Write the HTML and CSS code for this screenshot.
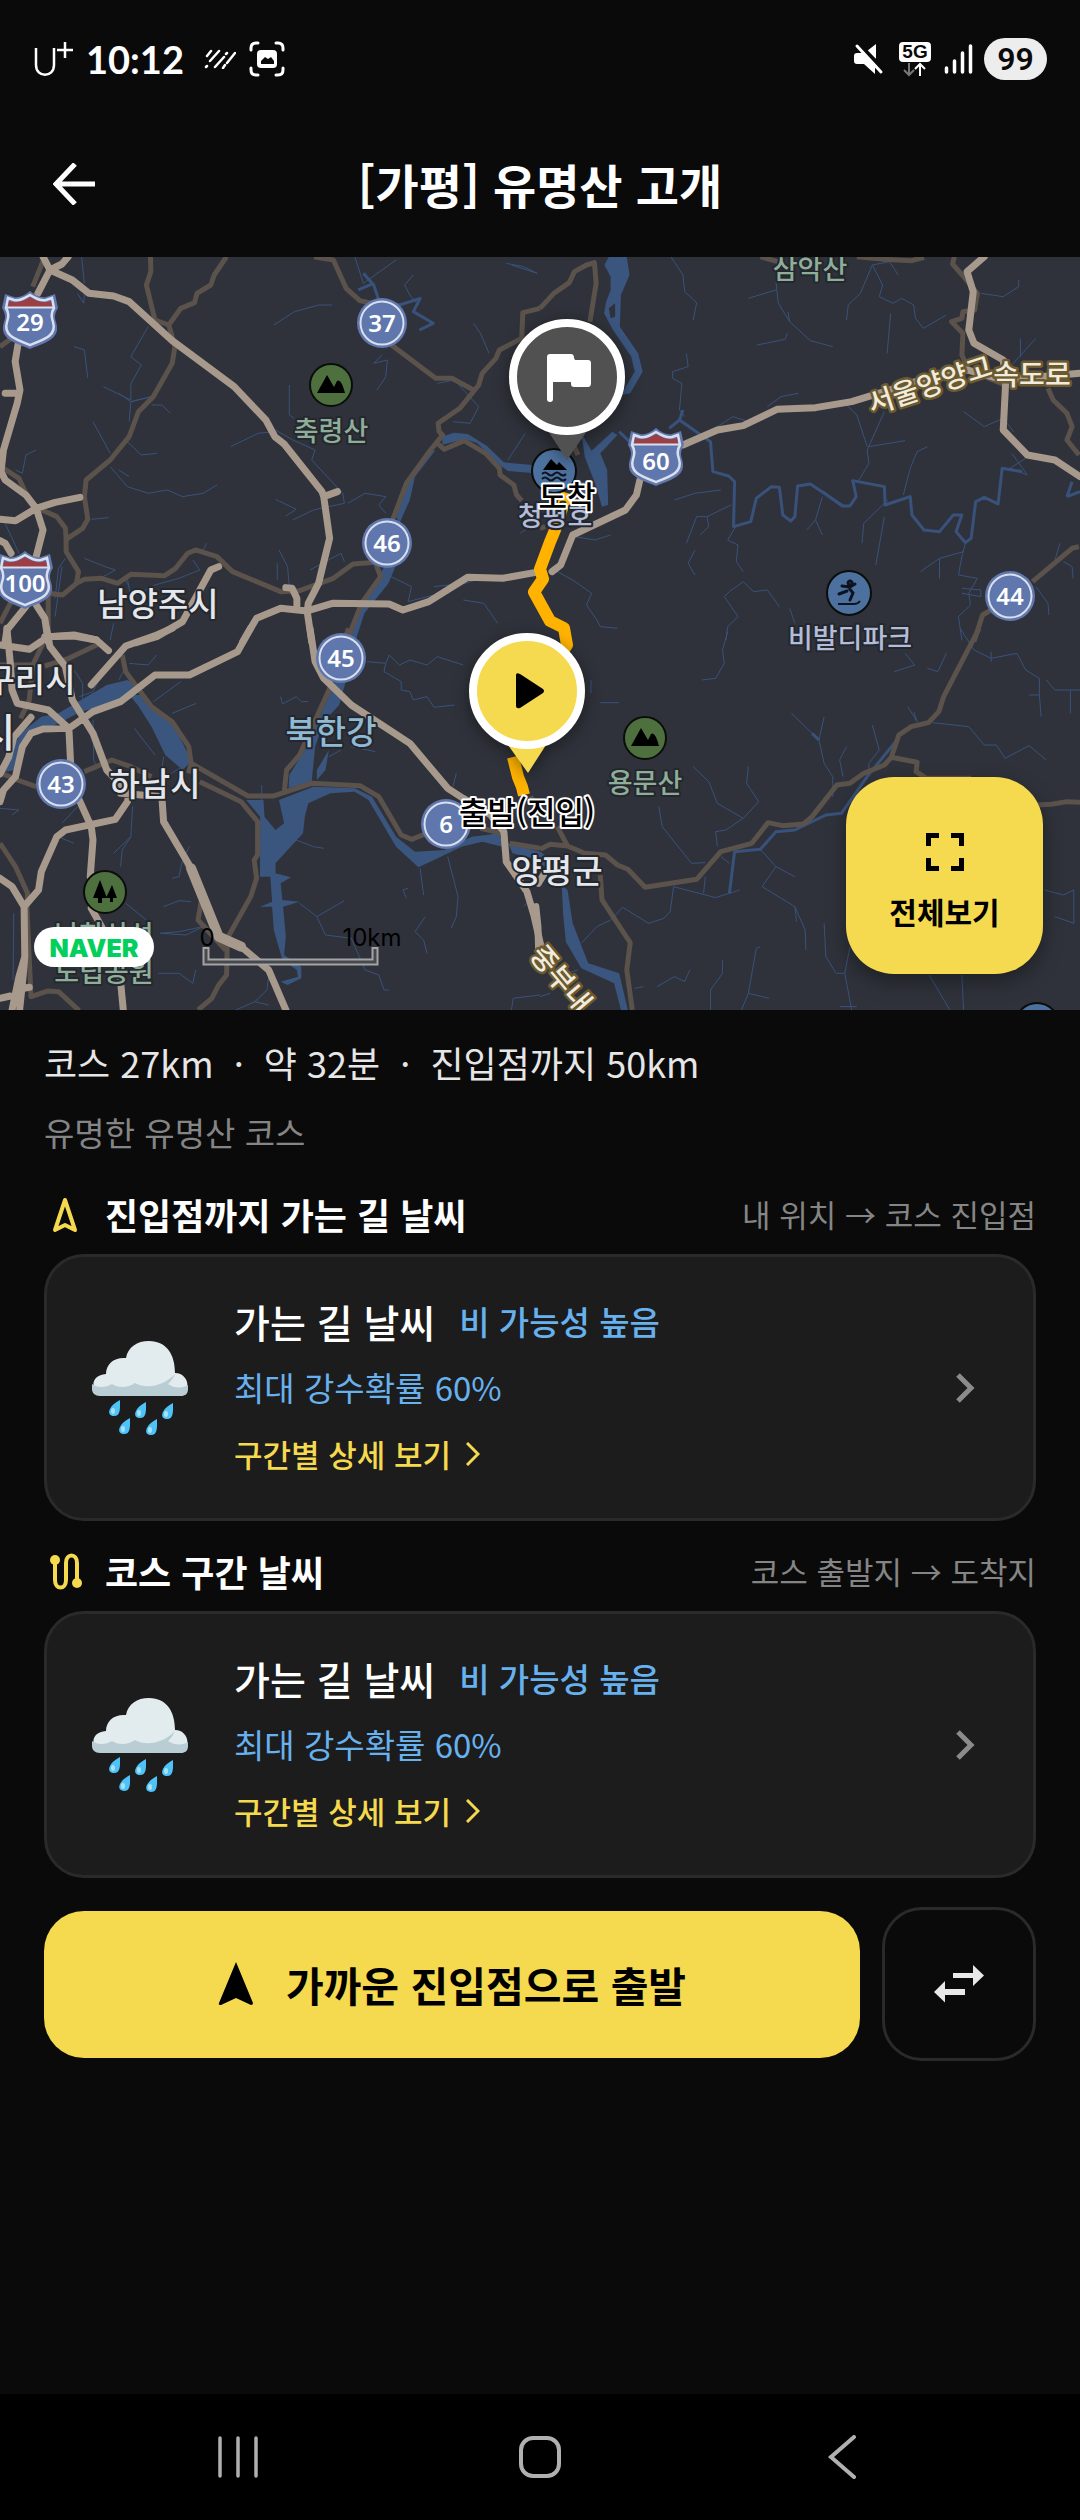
FILE: index.html
```html
<!DOCTYPE html>
<html lang="ko">
<head>
<meta charset="utf-8">
<meta name="viewport" content="width=device-width, initial-scale=1">
<title>[가평] 유명산 고개</title>
<link rel="stylesheet" href="styles.css">
</head>
<body>
<svg class="defs" aria-hidden="true">
  <symbol id="rain" viewBox="0 0 96 94">
    <path fill="#e2ebee" d="M10 55C-2 50-2 34 14 33c0-10 8-17 20-16C36 6 45 0 57 0c18 0 26 14 26 32 12 0 16 14 9 21z"/>
    <path fill="#b9ced4" d="M0 43c5 4 14 4 20 0 6 4 16 4 23-1 12 7 30 2 40-9-2 5-4 7-7 10 7 5 16 4 20 1v4c0 5-3 7-7 7H8c-5 0-8-3-8-7z"/>
    <g fill="#4fc3f7">
      <path id="drop" d="M28 59c0 8 1 16-6 16-8 0-6-10 6-16z"/>
      <use href="#drop" x="26" y="2"/><use href="#drop" x="53" y="3"/>
      <use href="#drop" x="10" y="18"/><use href="#drop" x="37" y="19"/>
    </g>
    <g fill="#a5e3fb">
      <ellipse cx="21" cy="70" rx="2" ry="3"/><ellipse cx="47" cy="72" rx="2" ry="3"/><ellipse cx="74" cy="73" rx="2" ry="3"/><ellipse cx="31" cy="88" rx="2" ry="3"/><ellipse cx="58" cy="89" rx="2" ry="3"/>
    </g>
  </symbol>
  <symbol id="chevron" viewBox="0 0 20 30"><path d="M2 2l13 13L2 28" fill="none" stroke="#8b8b8b" stroke-width="5"/></symbol>
  <symbol id="more" viewBox="0 0 14 24"><path d="M1 1l11 11L1 23" fill="none" stroke="#f5d94f" stroke-width="3"/></symbol>
  <symbol id="shield" viewBox="-28 -30 56 60">
    <path fill="#6078ae" d="M-25-26l9 3c6 1 11-2 16-6 5 4 10 7 16 6l9-3 3 14c-3 5-4 9-2 14C31 18 18 22 0 29-18 22-31 18-26 2c2-5 1-9-2-14z"/>
    <path fill="#5f77ad" stroke="#d9dfee" stroke-width="2.5" d="M-22-22l6 2c6 1 11-2 16-5 5 3 10 6 16 5l6-2 2 10c-3 5-3 9-1 14C27 15 16 19 0 25-16 19-27 15-23 2c2-5 2-9-1-14z"/>
    <path fill="#9b3f45" d="M-21-19c8 3 15 0 21-4 6 4 13 7 21 4l1 6h-44z"/>
    <path stroke="#d9dfee" stroke-width="2" d="M-23-12.500h46"/>
  </symbol>
  <symbol id="badge" viewBox="-26 -26 52 52"><circle r="25" fill="#6078ae"/><circle r="21.500" fill="#5f77ad" stroke="#d9dfee" stroke-width="2"/></symbol>
  <symbol id="mountain" viewBox="-24 -24 48 48"><circle r="21" fill="#4d703e" stroke="#0b0d0b" stroke-width="2"/><path d="M-14 8L-4-10 3 2l3-6q4-3 8 12z"/></symbol>
</svg>

<div class="status">
  <div class="status-side">
    <svg class="carrier" viewBox="0 0 40 36" role="img" aria-label="U+"><path d="M2 7v17c0 13 18 13 18 0V7M31 1v16M23 9h16" fill="none" stroke="#fff" stroke-width="2.500"/></svg>
    <span class="clock">10:12</span>
    <svg class="stripes" viewBox="0 0 32 20" aria-hidden="true"><path d="M2 18l1-1M3 7l4-5M6 12L15 2M11 18L20 8M22 5l1-1M19 19l2-3M23 14L31 4" stroke="#fff" stroke-width="2.500" stroke-linecap="round"/></svg>
    <svg class="capture" viewBox="0 0 36 36" aria-hidden="true"><path d="M2 9V7q0-5 5-5h2M27 2h2q5 0 5 5v2M34 27v2q0 5-5 5h-2M9 34H7q-5 0-5-5v-2" fill="none" stroke="#fff" stroke-width="3" stroke-linecap="round"/><rect x="8" y="9" width="20" height="18" rx="4" fill="#fff"/><path d="M12 23v-3l4-4 3 2 3-2 3 4v3z" fill="#0a0a0a"/></svg>
  </div>
  <div class="status-side status-right">
    <svg class="mute" viewBox="0 0 30 32" aria-hidden="true"><path fill="#fff" d="M22 1v15l-9-8zM3 10h6l12 13v8L10 21H3q-3 0-3-3v-5q0-3 3-3z"/><path d="M5 0l24 26" stroke="#0a0a0a" stroke-width="3"/><path d="M3 3l24 26" stroke="#fff" stroke-width="3" stroke-linecap="round"/></svg>
    <div class="network"><span>5G</span>
      <svg viewBox="0 0 32 15" aria-hidden="true"><g fill="none" stroke-width="2"><path d="M10 1v12M5 8l5 5 5-5" stroke="#777"/><path d="M21 14V2M16 7l5-5 5 5" stroke="#fff"/></g></svg>
    </div>
    <svg class="signal" viewBox="0 0 30 32" aria-hidden="true"><path d="M2.500 25v4M10.500 18v11M18.500 10v19M26.500 3v26" stroke="#fff" stroke-width="3.500" stroke-linecap="round"/></svg>
    <span class="battery">99</span>
  </div>
</div>

<header class="appbar">
  <button class="back" aria-label="뒤로"><svg viewBox="0 0 42 42"><path d="M42 21H4M22 1L3 21l19 20" fill="none" stroke="#fff" stroke-width="5"/></svg></button>
  <h1>[가평] 유명산 고개</h1>
</header>

<main>
<section class="map" aria-label="코스 지도">
<svg class="map-canvas" viewBox="0 0 1080 753">
  <rect width="1080" height="753" fill="#2f323a"/>
  <g class="tile" transform="matrix(.3444 0 0 .3333 0 -7)">
    <path class="lake" d="M1265 600L1205 680 1190 750 1160 820 1150 800 1180 700 1240 610zM1283 560l35-12 40 4 55 35 50 50 82 8v24l-70-6-20-14-70-70-35-12-65 17zM1120 945l28 5-20 50-70 90-25 80h-28l40-110z"/>
    <path class="river" d="M1055 70l30 35 15 45M1085 100l-45 20M1100 150l60 15 60-20-20 40 58 35-40 20"/>
    <path class="stream" d="M237 20l8 80M225 130l18 30 2-30M430 230l-50 90 30 25-32 60M215 290l30 10 10 85M380 405v45l-80-40M345 430l35 25 60-15-60 15-5 60M440 465h30l25 25M270 515l50 95M370 575l40 40 45-5M320 650l50 60 60 20 55-10 45 20 60-10 40-25M375 680l-30-20M105 600l-30 15-10 55-20-10M265 808l50-5M15 820l40 90M245 925l60 25 30 10-35 20M370 985l10 60 70-40 70-20 60-25-20-30M600 880l-10 20M800 540l50 30 65 30-10 30 45 50 45 50 5 30-90 20-60 30M670 590l80-40 50-5M800 748l60 30-30 20M1010 760l50-30 60 10-20 25 20 25M795 225l60-40 70-20h40M1095 420l25-40 5-50-40 10 25-25M1200 75l-25 30 15 30 25 30M1030 20l25 80 95-70M1375 220l20 30 25 60M1270 400l50-10 30 35 40 45-25 50-50-5M1470 40l50 10 40 20-75-25M1525 550l-50 80M810 900l25 50 5 60M805 940v50M900 960l90-50 10 25M1135 980l60 30-10 45 75-20M1260 1010l90-10 50-15M1345 1050l60 10 40 60M1510 850l30-20M840 405v90l15 10M375 1010l-15-25M160 1045l10-90 20-30M330 1120l-10 50M180 950l-20 150"/>
    <path class="local" d="M130 20L95 110M0 290l40-30M437 20l1 45-13 40 25 105 40 15 35-50 40-17 7-28 40-25 10-30 36-55M490 225l18 65-8 50-55 100-43 45-27 75-55 70-70 60-5 50 10 68-15 27-48 33-2-33-25-35-55-25M192 868v37l36 60-6 35-40 35-42-5M222 1000l23-12 50-3 47 15 38-27 98 4 32-22 35-45 23-10 62 20 45 45 140 60 55-3 98-37 57-43 65-5 15 43-55 80-42 110M0 648l55 37 20 45 25 40M912 20l56 10 37 85 40 37 55 13M1130 280l135 105h47l63 35M1568 175l-50 13-3 77-65 35-10 25-40 45-10 35-55 70-63 45 3 25 10 10-35 45-70 100-40 110M1270 580l20 18 58-26 62 38 40 45 2 20 40 30 8 30 15 17M0 1120l40-80M140 1030v135"/>
    <path class="highway" d="M125 20l20 40-35 70M198 20l-18 22-35 18 65 30 48 40 72 8 45 17 125 117 180 138 92 100 26 50 27 22 110 143 5 15 40-15M940 740l17 125-32 135-30 60-3 25 13 90M52 285l-8 50 14 85-8 40-40 140-7 65 12 25 60 45 30 40-60 37-45-4M105 775l55-18 72-15M15 430h40M105 775l20 65-20 80M0 872l15 8 17 30M75 1070l-55 70-5 35M105 1065l25 40 10 70M130 1160l85-2 65 12M635 950l-23 10-82 155-75 45-60 18M830 1013l18 2 14 30v33M705 1175l40-70 70-30 77 8 73-23 165 2 40 18 75-25 113-73 102 3 108-20"/>
  </g>
  <g class="tile" transform="matrix(.3444 0 0 .3333 540 -7)">
    <path class="lake" d="M200 20h52l8 55-25 60-3 95 53 80 13 55-36 65-27 5 40-70-10-45-53-80-26-50 6-35 13-35v-40l-18-35zM200 175l5 30 13-5v-40zM120 550l30 52 60-57 15 10-50 55 20 50 3 105-18 5-20-70-30-80zM100 690l40 10 15 50-30-10z" fill-rule="evenodd"/>
    <path class="river" d="M375 535l30-25 55 40 35 25 7 90 46 13 17 17-3 135 50-15 16-70 44-35 23 2 10 83 23 18 12-13 8-92 37-6 95 66h20l18-28-10-48 92 18 2 55 73-25 5 55 35 45 45 5 40-50h25l-17 50 27 33 17-13 13-110 25-13 40 20 12-107 58 10"/>
    <path class="river" d="M405 510l10-30M230 545l30 30M1530 740l15-45M1530 740l38-15M820 725l60 45"/>
    <path class="stream" d="M925 692l30-52-5-40 50-115M955 590l105-18M890 465l30 30 30 95M380 20l35 55 5 50 35 33-10 52M685 95l7 65 33 55 60 57 65 18M965 45l30 60-10 35 40 20 25-15 35 20 5 40 23 30 67-40M965 45l-35 85-35 35-5 45M965 45l50-10 25 40M1018 190l-10 120M1280 130l65 10 45-30V90M605 145l80-25M630 285l82-17 6-18M425 310l5 40-45 15v20l27 15-7 80 15 20M500 540l60-40 60 20M660 470l40-30 50-10M1440 265l-70 80M1395 265v55M390 750l60-20 75-10M555 765l-70 35 5 30-25 25M568 830l-23 40 30 15-5 50 20 30M485 800h-30l-30 80M450 900l-20 40 20 35M820 740l-20 70 20 45M800 810l-25 30M1010 750l-70 70-5 60M1000 800l-25 145M50 965l45 25 55 40-15 35 30 45 10 20 50 5M540 1170l5-40 30-30-40-60 15-15 40-30 30 30 40-5 35 50M725 1075l15 45M1235 880l-10 40-10 55 55 10-25 45 5 35-35 35 10 70M1105 965l55-40 70-20M1160 925v60M1225 1015l55 5v20l-55-10M1440 1010l35 50 3 35M1510 880l-15 50M1520 935l25 15 3 35M1230 485l60 45 55-25 30 40M1370 610l45 65-50-20 45-30M1055 735l20-80 20-50 30-15M100 860l60 10 45-15M725 215l-5-30"/>
    <path class="local" d="M0 175l40-45 45-32 15-33 35-20 23-7 5 62-18 115M640 20l50 15M920 20l80 8 80 4 35-10M1203 20l-5 22 32 38 40 50-8 50-34 5-3 20-30 10 33 35-3 65 20 45 105 45M1475 415l15 35 40 40 15 40-15 40 35 45M1565 890l-20 5-115 100M1310 1080l-25 15-25 80M100 590l10 25M0 835l15-5"/>
    <path class="highway" d="M1290 20l-50 45 18 60-13 115 15 40 85 50 7 70-7 140 70 75 80 15 73 50M415 585l100-45 75-13 98-49 112-5 105-18 95-30 90-30 150-35 105 30 223-20M290 690l-10 45-32 45-153 75-35 90-25 20"/>
  </g>
  <g class="tile" transform="matrix(.3444 0 0 .3333 0 373)">
    <path class="lake" d="M15 425l30-5 15-75 50-45 40-10 85-45 115-30 35-25 35-15-50-25-60 15-75 45-65 40-50 10-60 50-40 80zM375 195h35l30 40 60 40 50 105v20l-20 20-50-45-40-85-40-65zM975 150h30l-20 75-45 50-25 75-10 105-67 20 2-40 30-50 20-35 35-85 25-55zM955 360l-10 60-25 30v-30zM715 510l50 0 3 50 32 40 25-20-15-70 100-40 120 5 50 25 70 120 55 45 85-5 80-40 80-10 10 40-60-15-60 15-60 30-65 32-65-62-80-140-40-25-70 5-65 30-10 40-5 50-80 90v30l45 12-30 18 5 50 50 5-48 15 8 90-5 55 50 35v35l-40 20-20-10 50-15-3-20-42-30-25-90-5-70h-35l35-15-5-75h-30v-180zM1475 640l93 25v25l-80-20z"/>
    <path class="stream" d="M215 120l25 40v55M230 200l40-15 30-60M375 100l55 5 25-30M345 150l20-40M445 215l80-60M500 250l70-30M270 270l2 120 10 25M390 295l60 80M475 380l-10 70 65-40M0 535l55 5-20 15M385 530l-5 90-25 40-5 50M380 620l-50 50M225 530l-45 50M180 625l35 15M550 650l-20 40-10 50-20 5M475 830l45-18 35 3M465 910l55-5 70-15-50 25-75-5M1065 95l55 5 10-25 30 30 30-15 50 15 30-25 75 25M1120 100l-5 25 50 30v25l25 5 10 25 40-10 20 32 60-7M815 200l5 22 40-22 15 15h20M1020 350l70 15M990 360l-35 20M860 630l50 20 30 5M870 820l50 40 25 55 75 10 40 95 40 15 15 45h15M920 860l80-48M1220 715l10 80M1300 680l10 40 20 80-5 60-15 35M1235 860l-30 45 25 25 10 40M1185 775l-15 5 10 25M460 1030l60 0 40 30 8-40M365 820l60 50M780 1040l-5 40-35 35-55 25M740 1115l40 10M1568 1095l-78 10-5 35M1540 810l-20 20M40 850l-2 200M1325 430l-10 40M760 465v45"/>
    <path class="local" d="M0 105h95l-10 105-25 55M125 40l-30 65M0 428l50 22 55 20M130 108l70-23 70-35 30-15M245 425l80-35 55 20 60 30M355 75l10 50 75 105 60 45 48 75 7 50 165 98h75l110-38 140 7 55 33 65 115 30 13 40-16M580 455l120 60 48 60v100l-10 15 7 55-17 55-68 125-2 110-23 30-20 40-40 35M1012-5l-52 175-40 90-50 115-38 45-7 70M555 400l-8 30M0 640l45 70 35 80-2 40 12 270 50-17 30 2 60 57M525 660l60 150-10 60 80 90M1480 640l88 15M1395 595l65 15M1540 500l30 50"/>
    <path class="highway" d="M20-5l10 105 5 80 15 40 90 20 60 55 5 105M0 45l85 13 55-38 75-5 65 15 35 32M135-5l10 55 45 60 20 100 60 100 40 110 65 70M90 262l-50 60-15 60-25 50M0 515l10-35 35-40 20-90 25-40 35-13 75-2 70-50 80-30 100-80h100l140-70 37-70M265 165L365 48l90-33 45-20M230 510l35 80 5 40-8 110M265 835l30 55 50 110 13 140M375 490l-5 25-35 53-145 32-25 20-45 105-8 55-42 50M0 745l35 25 35 60 2 150-17 60-20 100M72 980l-5 60-10 100M350 490l120 10 5 75 80 140 45 115 35 90 65 30 80 70 50 120M900-5l15 100 25 50 80 80 170 115 110 135 45 30 80 50 38 50 7 90 60 90 20 70 20 90M0 1105l30-7M70 1075l15-3"/>
    <path class="highway wide" d="M555 715l45 115 35 90 65 30"/>
  </g>
  <g class="tile" transform="matrix(.3444 0 0 .3333 540 373)">
    <path class="lake" d="M0 665l15 10v35l-15-10zM63 765l17 15 15 100 45 120 90 30 25 110h-20l-20-80-95-45-45-80-8-85z"/>
    <path class="stream" d="M120 940l45-50 40-20 35-38 75 48 45-15 18-20 10-75 122 33 70-23M475 790l5-50M640 658l45 52-40 60 95 60 30 70 2 60M740 830l5 45M685 710l55 30M345 530l10 60 85 110 40-2M445 410l45 45 25 65 75 45-50 35-30 5 5 45M605 410l-5 50 35 55-45 50M730 250l80 80 15 70 25 40v60M825 260l-15 70M965 285l20 75-30 40v20M890 350l-20 40 10 50M1068 230l27 45-10-30M1140 278l105 12 45 55h35l25 40 70-38 50 43M1220-5l40 65 50 25 75-15 25 50 40 25v50l5 65M1470 150l25 30h73M1310 65v30M1540 180v70M1180 70l-25 55-30-10M1060 70l28 35-60 20M545 5l-15 55 5 40-25 45-40 5M1465 780l55 15 30-15v100l-55-20M825 880l5 100 30 50h25l15-80M885 1030l20 110M1130 1035l60 105M1225 1035l5 105M640 950l-12 5-23 135-20 50M605 1090l60 15M530 990v40l-35 50v60M340 1070l50-30 30 15 15-35M175 218h55M148 150v40M1420 195h30M0 1100l30-10M80 1030l30-10M275 1075l25-5M870 1130h50M525 680l25 20"/>
    <path class="river" d="M550 790l15-125 75-7 45-53 55-5 90-45 45-5 75-110 90-115M790 310l20 20"/>
    <path class="local" d="M1275-5L1172 200l-14 45-30 33-50 12-36 25-22 67-20 23-60 25-40 30-38 5-72 95-25 22-60 5-43-9-47 62-90 25-70 83-150 24-50-54-30-13-35-30-60-5-50-22-50-5-30 15M80 648l-30-58M175 735l5 75 82 128-10 82 16 120M1020 382l75 15-3 28 30 20h130M1440 525l45-2 45-8 38 2"/>
    <path class="highway" d="M-5 760l15-25M-12 830l6 60 2 70"/>
  </g>
  <path class="route" d="M567 236l-12 37-5 12-10 27 3 10-9 13 16 29 14 7 3 17-12 18-13 8M513 500l5 20 4 10 2 8"/>

  <g class="roadnum">
    <use href="#shield" x="2" y="33" width="56" height="60"/><text x="30" y="74">29</text>
    <use href="#shield" x="-3" y="293" width="56" height="60"/><text x="25" y="335">100</text>
    <use href="#shield" x="628" y="170" width="56" height="60"/><text x="656" y="213">60</text>
    <use href="#badge" x="356" y="40" width="52" height="52"/><text x="382" y="75">37</text>
    <use href="#badge" x="361" y="260" width="52" height="52"/><text x="387" y="295">46</text>
    <use href="#badge" x="315" y="375" width="52" height="52"/><text x="341" y="410">45</text>
    <use href="#badge" x="35" y="501" width="52" height="52"/><text x="61" y="536">43</text>
    <use href="#badge" x="420" y="541" width="52" height="52"/><text x="446" y="576">6</text>
    <use href="#badge" x="984" y="313" width="52" height="52"/><text x="1010" y="348">44</text>
  </g>
  <use href="#mountain" x="307" y="104" width="48" height="48"/>
  <use href="#mountain" x="621" y="457" width="48" height="48"/>
  <circle cx="105" cy="635" r="21" fill="#4d703e" stroke="#0b0d0b" stroke-width="2"/><path d="M100 623l-7 18h5v5h4v-5h5zM112 628l-6 13h4v4h3v-4h4z"/>
  <circle cx="849" cy="336" r="22" fill="#4d719e" stroke="#0b0d0b" stroke-width="2"/>
  <path d="M850 324a2 2 0 1 0 .1 0M839 337l8-3M842 329l8 1 5-3M849 331l4 5-3 7" fill="none" stroke="#0b1420" stroke-width="3" stroke-linecap="round"/><path d="M838 347h16q4 0 6-3" fill="none" stroke="#0b1420" stroke-width="2"/>
  <circle cx="554" cy="214" r="22" fill="#4d719e" stroke="#0b0d0b" stroke-width="2"/><path d="M543 213l8-11 6 6 2-3 8 8z"/><path d="M542 217q3-3 6 0t6 0 6 0 6 0M542 222q3-3 6 0t6 0 6 0 6 0" fill="none" stroke="#0b1420" stroke-width="2"/>
  <circle cx="1037" cy="768" r="22" fill="#4d719e" stroke="#0b0d0b" stroke-width="2"/>

  <g class="place">
    <text class="nature" x="331" y="184">축령산</text>
    <text class="nature" x="810" y="22">삼악산</text>
    <text class="nature" x="645" y="536">용문산</text>
    <text class="nature" x="104" y="688">남한산성</text>
    <text class="nature" x="104" y="725">도립공원</text>
    <text class="poi" x="850" y="391">비발디파크</text>
    <text class="poi" x="555" y="269">청평호</text>
    <text class="city" x="158" y="359">남양주시</text>
    <text class="city" x="155" y="539">하남시</text>
    <text class="city" x="30" y="435">구리시</text>
    <text class="city metro" x="-3" y="490">시</text>
    <text class="city" x="557" y="626">양평군</text>
    <text class="city water" x="331" y="487">북한강</text>
  </g>
  <g class="roadname">
    <text transform="translate(930 128) rotate(-18)" y="10">서울양양고</text>
    <text x="1032" y="128">속도로</text>
    <text transform="translate(561 722) rotate(50)" y="10">중부내</text>
  </g>
  <g class="pin">
    <path d="M548 174h39l-20 29z" fill="#515151"/>
    <circle cx="567" cy="120" r="54" fill="#515151" stroke="#fff" stroke-width="8"/>
    <path d="M550 97h21q3 0 3 4l1 2h13q3 0 3 3v20q0 4-3 4h-14q-3 0-3-3v-2h-18v17q0 3-3 3t-3-3v-42q0-3 3-3z" fill="#fff"/>
  </g>
  <g class="pin">
    <path d="M508 488h38l-18 28z" fill="#f5d94f"/>
    <circle cx="527" cy="434" r="54" fill="#f5d94f" stroke="#fff" stroke-width="8"/>
    <path d="M516 418q0-3 4-1l23 15q2 2 0 4l-23 15q-4 1-4-2z"/>
  </g>
  <g class="pinlabel"><text x="567" y="251">도착</text><text x="527" y="567">출발(진입)</text></g>
  <rect x="34" y="670" width="120" height="40" rx="20" fill="#fff"/><text class="naver" x="94" y="700">NAVER</text>
  <path d="M206 690v15h169v-15" fill="none" stroke="#a3a4a8" stroke-width="7"/><path d="M206 692v13h169v-13" fill="none" stroke="#48494d" stroke-width="3"/>
  <g class="scale"><text x="207" y="689">0</text><text x="372" y="689">10km</text></g>
</svg>
<button class="fit"><svg viewBox="0 0 38 38" aria-hidden="true"><path d="M2.500 13V2.500H13M25 2.500h10.500V13M35.500 25v10.500H25M13 35.500H2.500V25" fill="none" stroke="#000" stroke-width="5"/></svg>전체보기</button>
</section>

<div class="content">
  <p class="summary">코스 27km &nbsp;·&nbsp; 약 32분 &nbsp;·&nbsp; 진입점까지 50km</p>
  <p class="desc">유명한 유명산 코스</p>

  <section class="leg">
    <div class="leg-head">
      <svg class="leg-icon" viewBox="0 0 42 42" aria-hidden="true"><path d="M21 7L11 37l10-5 10 5z" fill="none" stroke="#f5d94f" stroke-width="4" stroke-linejoin="round"/></svg>
      <h2>진입점까지 가는 길 날씨</h2><span class="leg-range">내 위치 → 코스 진입점</span>
    </div>
    <a class="card" href="#approach">
      <svg class="weather"><use href="#rain"/></svg>
      <span class="card-text">
        <span class="card-title"><strong>가는 길 날씨</strong><em>비 가능성 높음</em></span>
        <span class="rain">최대 강수확률 60%</span>
        <span class="detail">구간별 상세 보기<svg><use href="#more"/></svg></span>
      </span>
      <svg class="chevron"><use href="#chevron"/></svg>
    </a>
  </section>

  <section class="leg">
    <div class="leg-head">
      <svg class="leg-icon" viewBox="0 0 42 42" aria-hidden="true"><path d="M11 12v18c0 10 11 10 11 0V13c0-10 11-10 11 0v18" fill="none" stroke="#f5d94f" stroke-width="4"/><circle cx="11" cy="10" r="5" fill="#f5d94f"/><circle cx="33" cy="33" r="5" fill="#f5d94f"/></svg>
      <h2>코스 구간 날씨</h2><span class="leg-range">코스 출발지 → 도착지</span>
    </div>
    <a class="card" href="#course">
      <svg class="weather"><use href="#rain"/></svg>
      <span class="card-text">
        <span class="card-title"><strong>가는 길 날씨</strong><em>비 가능성 높음</em></span>
        <span class="rain">최대 강수확률 60%</span>
        <span class="detail">구간별 상세 보기<svg><use href="#more"/></svg></span>
      </span>
      <svg class="chevron"><use href="#chevron"/></svg>
    </a>
  </section>

  <div class="actions">
    <button class="start"><svg viewBox="0 0 36 44" aria-hidden="true"><path d="M18 0l17 41q0 2-2 2l-15-7-15 7q-3 0-2-2z"/></svg>가까운 진입점으로 출발</button>
    <button class="swap" aria-label="방향 전환"><svg viewBox="0 0 50 38"><path fill="#e8e8e8" d="M19 8h20V0l11 10.500L39 21v-8H19zM31 24H11v-8L0 27l11 10.500V30h20z"/></svg></button>
  </div>
</div>
</main>

<nav class="sysnav">
  <button aria-label="최근 앱"><svg viewBox="0 0 44 44"><path d="M4 3v38M22 3v38M40 3v38" stroke="#b0b0b0" stroke-width="3.500" stroke-linecap="round"/></svg></button>
  <button aria-label="홈"><svg viewBox="0 0 44 44"><rect x="3" y="3" width="38" height="38" rx="12" fill="none" stroke="#b0b0b0" stroke-width="4"/></svg></button>
  <button aria-label="뒤로 가기"><svg viewBox="0 0 44 44"><path d="M34 2L11 22l23 20" fill="none" stroke="#b0b0b0" stroke-width="4" stroke-linecap="round"/></svg></button>
</nav>
</body>
</html>
```
FILE: styles.css
```css
* { box-sizing: border-box; margin: 0; padding: 0; }

body {
  display: flex;
  flex-direction: column;
  min-height: 100vh;
  background: #0a0a0a;
  color: #fff;
  font-family: "Noto Sans CJK KR", sans-serif;
}

svg { display: block; flex: none; }
.defs { position: absolute; width: 0; height: 0; }
button { border: 0; background: none; color: inherit; font: inherit; cursor: pointer; }

/* status bar */
.status {
  display: flex;
  justify-content: space-between;
  align-items: center;
  height: 118px;
  padding: 0 33px 0 34px;
}
.status-side { display: flex; align-items: center; }
.carrier { width: 40px; height: 36px; }
.clock { margin: 0 20px 0 12px; font: 700 38px/42px Lato, sans-serif; }
.stripes { width: 32px; height: 20px; margin-right: 13px; }
.capture { width: 36px; height: 36px; }
.mute { width: 30px; height: 32px; }
.network { margin: 0 13px 0 15px; width: 32px; }
.network span {
  display: block;
  border-radius: 4px;
  background: #fff;
  color: #0a0a0a;
  font: 700 19px/20px "Liberation Sans", sans-serif;
  text-align: center;
}
.network svg { width: 32px; height: 15px; }
.signal { width: 30px; height: 32px; margin-right: 10px; }
.battery {
  width: 63px;
  border-radius: 21px;
  background: #ededed;
  color: #0a0a0a;
  font: 600 32px/42px Roboto, sans-serif;
  text-align: center;
}

/* app bar */
.appbar {
  display: grid;
  grid-template-columns: 84px 1fr 84px;
  align-items: center;
  height: 139px;
  padding: 0 32px 8px;
}
.back { display: grid; place-items: center; height: 84px; }
.back svg { width: 42px; height: 42px; }
.appbar h1 { font-size: 47px; font-weight: 700; line-height: 64px; text-align: center; }

main { flex: 1; }

/* map */
.map { position: relative; }
.map-canvas { width: 100%; height: auto; font-family: "Noto Sans CJK KR", sans-serif; }
.tile path { vector-effect: non-scaling-stroke; fill: none; stroke-linejoin: round; }
.tile .lake { fill: #3a557e; }
.stream, .river { stroke: #38527c; stroke-width: 1px; }
.tile .river { stroke-width: 3px; }
.local { stroke: #5a524b; stroke-width: 5px; }
.highway { stroke: #a8998d; stroke-width: 7px; stroke-linecap: round; }
.tile .wide { stroke-width: 10px; }
.route { fill: none; stroke: #ffb300; stroke-width: 12px; stroke-linejoin: round; }
.map text { text-anchor: middle; }
.roadnum { fill: #fff; font: 600 24px "Noto Sans", sans-serif; }
.place text { paint-order: stroke; stroke: #24272d; stroke-width: 4px; stroke-linejoin: round; font-weight: 500; }
.place .nature { fill: #8fae9a; font-size: 27px; }
.place .poi { fill: #b3bcd8; font-size: 27px; }
.place .city { fill: #e4e7ec; font-size: 33px; }
.place .metro { font-size: 40px; }
.place .water { fill: #90b9d4; }
.roadname { fill: #f0ebdc; stroke: #6b5930; stroke-width: 5px; stroke-linejoin: round; paint-order: stroke; font-size: 28px; font-weight: 500; }
.pin { filter: drop-shadow(0 4px 8px rgba(0, 0, 0, .4)); }
.pinlabel { fill: #000; stroke: #fff; stroke-width: 4px; stroke-linejoin: round; paint-order: stroke; font-size: 31px; font-weight: 500; }
.naver { fill: #03cf5d; font: 900 25px Inter, sans-serif; }
.scale { fill: #000; font: 400 24px Inter, sans-serif; }
.fit {
  position: absolute;
  right: 37px;
  bottom: 36px;
  display: flex;
  flex-direction: column;
  align-items: center;
  justify-content: center;
  gap: 18px;
  width: 197px;
  height: 197px;
  padding-top: 14px;
  border-radius: 48px;
  background: #f5d94f;
  box-shadow: 0 8px 20px rgba(0, 0, 0, .35);
  color: #000;
  font-size: 30px;
  font-weight: 700;
  line-height: 44px;
}
.fit svg { width: 38px; height: 38px; }

/* course information */
.content { padding: 28px 44px; }
.summary { color: #e6e6e6; font-size: 36px; line-height: 48px; }
.desc { margin: 24px 0 36px; color: #858585; font-size: 33px; line-height: 44px; }
.leg { margin-bottom: 26px; }
.leg-head { display: flex; align-items: center; height: 48px; margin-bottom: 16px; }
.leg-icon { width: 42px; height: 42px; margin-right: 19px; }
.leg-head h2 { flex: 1; font-size: 36px; font-weight: 700; line-height: 48px; }
.leg-range { color: #858585; font-size: 31px; line-height: 44px; }
.card {
  display: flex;
  align-items: center;
  padding: 43px 57px 43px 45px;
  border: 3px solid #2a2a2a;
  border-radius: 40px;
  background: #1c1c1c;
  color: #fff;
  text-decoration: none;
}
.weather { width: 96px; height: 94px; margin-right: 46px; }
.card-text { display: flex; flex: 1; flex-direction: column; gap: 23px; line-height: 43px; }
.card-title { display: flex; align-items: center; gap: 24px; }
.card-title strong { font-size: 39px; font-weight: 500; }
.card-title em { color: #68b1ef; font-size: 33px; font-style: normal; font-weight: 500; }
.rain { color: #68b1ef; font-size: 33px; }
.detail { display: flex; align-items: center; gap: 15px; color: #f5d94f; font-size: 31px; font-weight: 500; }
.detail svg { width: 14px; height: 24px; }
.chevron { width: 20px; height: 30px; }

.actions { display: flex; align-items: center; gap: 22px; padding-top: 3px; }
.start {
  display: flex;
  flex: 1;
  align-items: center;
  justify-content: center;
  gap: 32px;
  height: 147px;
  border-radius: 40px;
  background: #f5d94f;
  color: #000;
  font-size: 41px;
  font-weight: 700;
}
.start svg { width: 36px; height: 44px; }
.swap { display: grid; place-items: center; width: 154px; height: 154px; border: 3px solid #2a2a2a; border-radius: 40px; }
.swap svg { width: 50px; height: 38px; }

/* system navigation */
.sysnav { display: flex; justify-content: center; align-items: center; height: 126px; background: #000; }
.sysnav button { display: grid; place-items: center; width: 28%; height: 100%; }
.sysnav svg { width: 44px; height: 44px; }
```
